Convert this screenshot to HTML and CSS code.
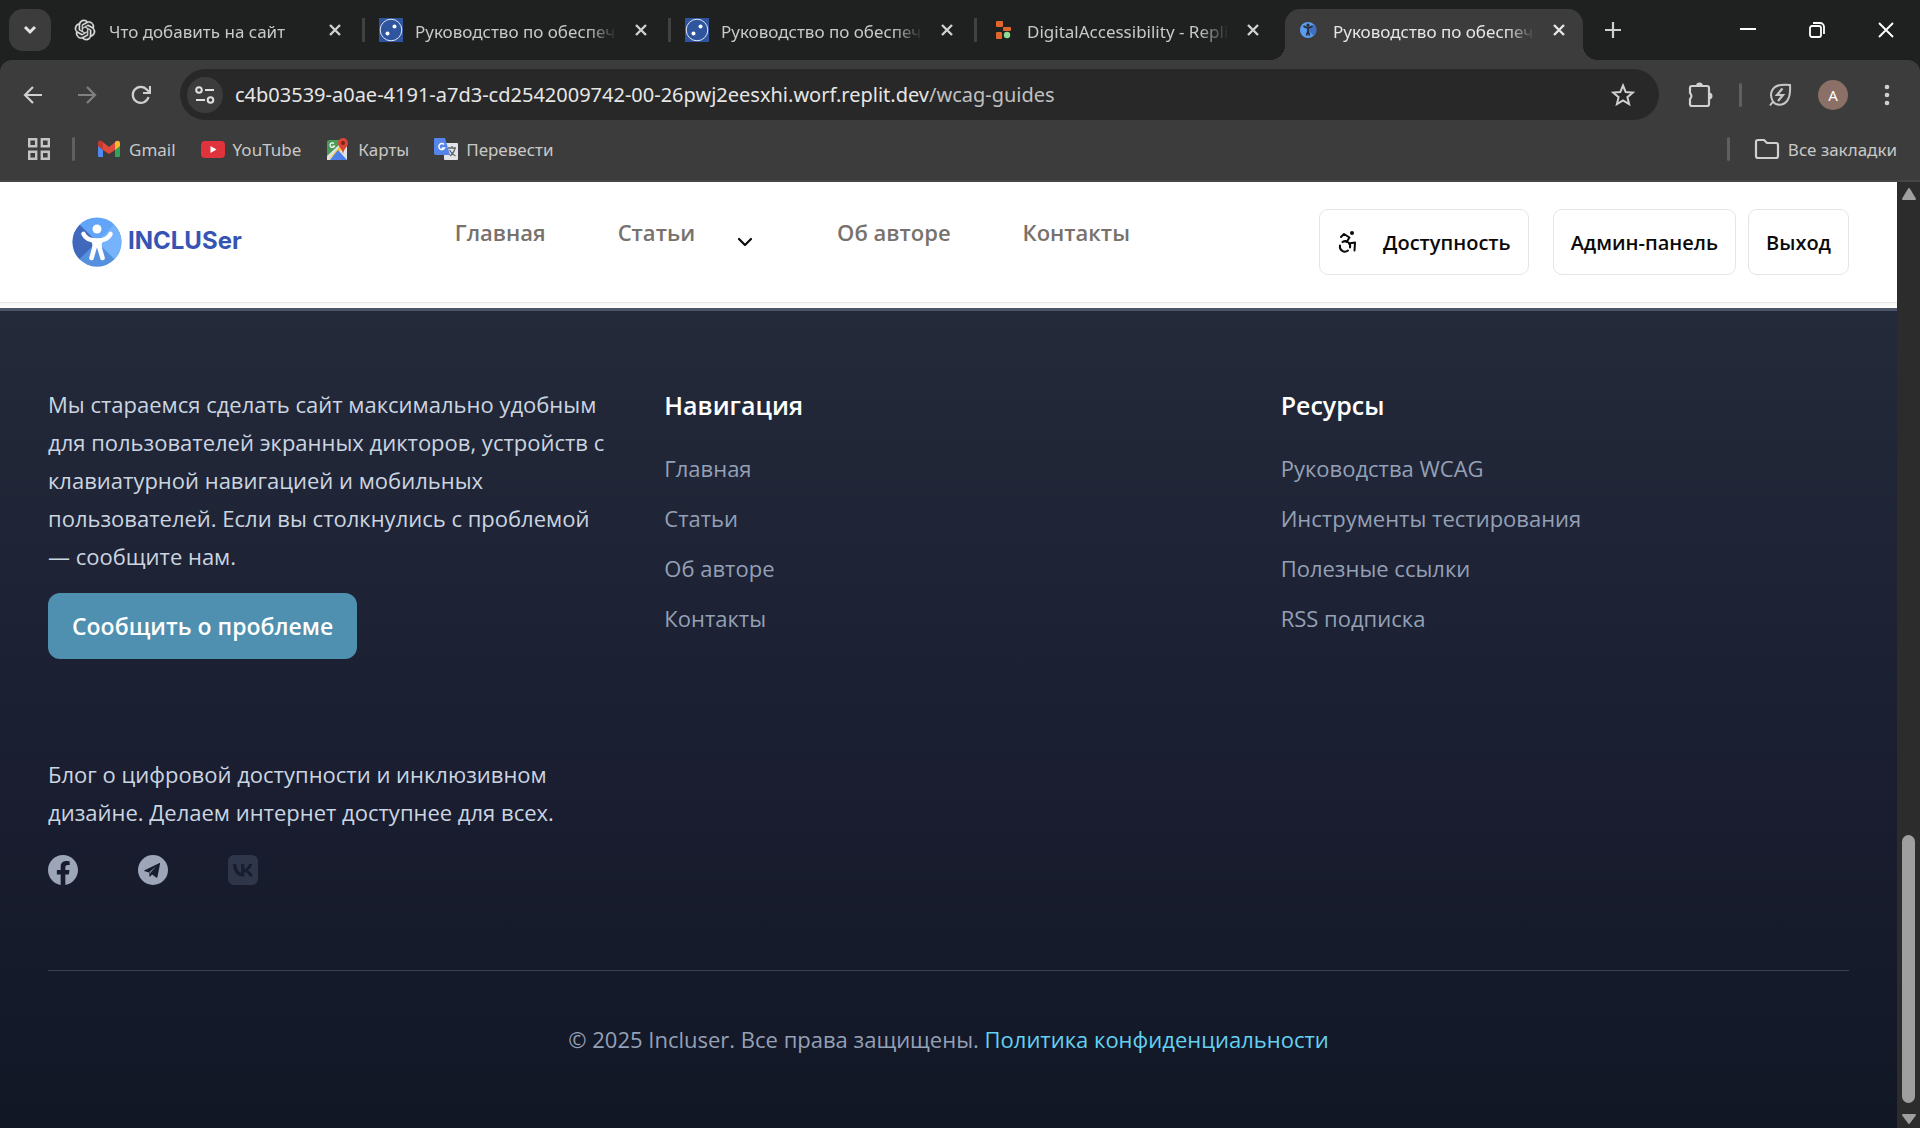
FILE: index.html
```html
<!DOCTYPE html>
<html lang="ru">
<head>
<meta charset="utf-8">
<meta name="viewport" content="width=device-width, initial-scale=1">
<title>Руководство по обеспечению доступности</title>
<link rel="stylesheet" href="styles.css">
</head>
<body>
<div class="browser">
  <div class="tabstrip">
    <button class="tab-search" aria-label="Поиск вкладок"><svg width="14" height="10" viewBox="0 0 14 10"><path d="M2 2l5 5 5-5" fill="none" stroke="#e3e3e3" stroke-width="3"/></svg></button>
    <div class="tabs">
      <div class="tab">
        <svg class="favicon" width="24" height="24" viewBox="-2 -2 28 28"><path fill="#dcdcdc" stroke="#dcdcdc" stroke-width=".4" d="M22.2819 9.8211a5.9847 5.9847 0 0 0-.5157-4.9108 6.0462 6.0462 0 0 0-6.5098-2.9A6.0651 6.0651 0 0 0 4.9807 4.1818a5.9847 5.9847 0 0 0-3.9977 2.9 6.0462 6.0462 0 0 0 .7427 7.0966 5.98 5.98 0 0 0 .511 4.9107 6.051 6.051 0 0 0 6.5146 2.9001A5.9847 5.9847 0 0 0 13.2599 24a6.0557 6.0557 0 0 0 5.7718-4.2058 5.9894 5.9894 0 0 0 3.9977-2.9001 6.0557 6.0557 0 0 0-.7475-7.0729zm-9.022 12.6081a4.4755 4.4755 0 0 1-2.8764-1.0408l.1419-.0804 4.7783-2.7582a.7948.7948 0 0 0 .3927-.6813v-6.7369l2.02 1.1686a.071.071 0 0 1 .038.052v5.5826a4.504 4.504 0 0 1-4.4945 4.4944zm-9.6607-4.1254a4.4708 4.4708 0 0 1-.5346-3.0137l.142.0852 4.783 2.7582a.7712.7712 0 0 0 .7806 0l5.8428-3.3685v2.3324a.0804.0804 0 0 1-.0332.0615L9.74 19.9502a4.4992 4.4992 0 0 1-6.1408-1.6464zM2.3408 7.8956a4.485 4.485 0 0 1 2.3655-1.9728V11.6a.7664.7664 0 0 0 .3879.6765l5.8144 3.3543-2.0201 1.1685a.0757.0757 0 0 1-.071 0l-4.8303-2.7865A4.504 4.504 0 0 1 2.3408 7.872zm16.5963 3.8558L13.1038 8.364 15.1192 7.2a.0757.0757 0 0 1 .071 0l4.8303 2.7913a4.4944 4.4944 0 0 1-.6765 8.1042v-5.6772a.79.79 0 0 0-.407-.667zm2.0107-3.0231l-.142-.0852-4.7735-2.7818a.7759.7759 0 0 0-.7854 0L9.409 9.2297V6.8974a.0662.0662 0 0 1 .0284-.0615l4.8303-2.7866a4.4992 4.4992 0 0 1 6.6802 4.66zM8.3065 12.863l-2.02-1.1638a.0804.0804 0 0 1-.038-.0567V6.0742a4.4992 4.4992 0 0 1 7.3757-3.4537l-.142.0805L8.704 5.459a.7948.7948 0 0 0-.3927.6813zm1.0976-2.3654l2.602-1.4998 2.6069 1.4998v2.9994l-2.5974 1.4997-2.6067-1.4997Z"/></svg>
        <span class="tab-title">Что добавить на сайт</span>
        <button class="tab-close" aria-label="Закрыть"><svg width="14" height="14" viewBox="0 0 14 14"><path d="M2 2l10 10M12 2L2 12" stroke="#d0d0d0" stroke-width="2.400"/></svg></button>
      </div>
      <div class="tab">
        <svg class="favicon" width="24" height="24" viewBox="0 0 24 24"><path fill="#2f559f" d="M0 0h24v24H0z"/><circle cx="12" cy="12" r="10.800" fill="none" stroke="#dde6f5" stroke-width="1"/><circle cx="15.500" cy="8.500" r="2" fill="#fff"/><circle cx="8.500" cy="15.500" r="2" fill="#fff"/></svg>
        <span class="tab-title">Руководство по обеспечению</span>
        <button class="tab-close" aria-label="Закрыть"><svg width="14" height="14" viewBox="0 0 14 14"><path d="M2 2l10 10M12 2L2 12" stroke="#d0d0d0" stroke-width="2.400"/></svg></button>
      </div>
      <div class="tab">
        <svg class="favicon" width="24" height="24" viewBox="0 0 24 24"><path fill="#2f559f" d="M0 0h24v24H0z"/><circle cx="12" cy="12" r="10.800" fill="none" stroke="#dde6f5" stroke-width="1"/><circle cx="15.500" cy="8.500" r="2" fill="#fff"/><circle cx="8.500" cy="15.500" r="2" fill="#fff"/></svg>
        <span class="tab-title">Руководство по обеспечению</span>
        <button class="tab-close" aria-label="Закрыть"><svg width="14" height="14" viewBox="0 0 14 14"><path d="M2 2l10 10M12 2L2 12" stroke="#d0d0d0" stroke-width="2.400"/></svg></button>
      </div>
      <div class="tab tab-last">
        <svg class="favicon" width="24" height="24" viewBox="0 0 24 24"><rect x="5" y="3" width="7" height="6" rx="1" fill="#e0662b"/><rect x="12" y="9" width="8" height="4" rx="1" fill="#e0662b"/><rect x="5" y="14" width="6" height="7" rx="1" fill="#e0662b"/><circle cx="16" cy="17" r="3.200" fill="#8fdc8f"/></svg>
        <span class="tab-title">DigitalAccessibility - Replit</span>
        <button class="tab-close" aria-label="Закрыть"><svg width="14" height="14" viewBox="0 0 14 14"><path d="M2 2l10 10M12 2L2 12" stroke="#d0d0d0" stroke-width="2.400"/></svg></button>
      </div>
      <div class="tab tab-active">
        <svg class="favicon" width="24" height="24" viewBox="0 0 24 24"><circle cx="11" cy="12" r="8" fill="#5a9cf0"/><path d="M11 12l6-6a8 8 0 0 1 0 12z" fill="#3f6fc0"/><path d="M6.500 8q4.500 3.500 9 0M11 10v4M9.500 17.500l1.500-4.500 1.500 4.500" fill="none" stroke="#2b3038" stroke-width="1.800"/><circle cx="11" cy="7.200" r="1.600" fill="#2b3038"/></svg>
        <span class="tab-title">Руководство по обеспечению</span>
        <button class="tab-close" aria-label="Закрыть"><svg width="14" height="14" viewBox="0 0 14 14"><path d="M2 2l10 10M12 2L2 12" stroke="#e6e6e6" stroke-width="2.400"/></svg></button>
      </div>
    </div>
    <button class="new-tab" aria-label="Новая вкладка"><svg width="16" height="16" viewBox="0 0 16 16"><path d="M8 0v16M0 8h16" stroke="#d0d0d0" stroke-width="2.200"/></svg></button>
    <div class="window-controls">
      <button aria-label="Свернуть"><svg width="16" height="16" viewBox="0 0 16 16"><path d="M0 7h16" stroke="#fff" stroke-width="2"/></svg></button>
      <button aria-label="Восстановить"><svg width="16" height="16" viewBox="0 0 16 16"><g fill="none" stroke="#fff" stroke-width="1.800"><rect x="1" y="4" width="11" height="11" rx="2"/><path d="M4 1h7a4 4 0 0 1 4 4v7"/></g></svg></button>
      <button aria-label="Закрыть окно"><svg width="16" height="16" viewBox="0 0 16 16"><path d="M1 1l14 14M15 1L1 15" stroke="#fff" stroke-width="1.900"/></svg></button>
    </div>
  </div>

  <div class="toolbar">
    <button class="tool" aria-label="Назад"><svg width="20" height="20" viewBox="0 0 20 20"><path d="M19 10H3M10 2l-8 8 8 8" fill="none" stroke="#d0d0d0" stroke-width="2.200"/></svg></button>
    <button class="tool" aria-label="Вперёд"><svg width="20" height="20" viewBox="0 0 20 20"><path d="M1 10h16M10 2l8 8-8 8" fill="none" stroke="#808080" stroke-width="2.200"/></svg></button>
    <button class="tool" aria-label="Обновить"><svg width="20" height="20" viewBox="0 0 20 20"><path d="M17.500 12A8 8 0 1 1 16 4.800l2 2" fill="none" stroke="#d0d0d0" stroke-width="2.200"/><path d="M12 8h7V1" fill="none" stroke="#d0d0d0" stroke-width="2.200"/></svg></button>
    <div class="omnibox">
      <button class="site-info" aria-label="Сведения о сайте"><svg width="20" height="20" viewBox="0 0 20 20"><g fill="none" stroke="#e0e0e0" stroke-width="2"><circle cx="4" cy="5" r="2.800"/><path d="M10 5h9"/><circle cx="15.500" cy="15" r="2.800"/><path d="M1 15h9"/></g></svg></button>
      <a class="url" href="#">c4b03539-a0ae-4191-a7d3-cd2542009742-00-26pwj2eesxhi.worf.replit.dev<span class="url-path">/wcag-guides</span></a>
      <button class="star" aria-label="Добавить в закладки"><svg width="24" height="24" viewBox="0 0 24 24"><path d="M12 2.500l2.700 6.600 7.100.5-5.400 4.600 1.700 6.900L12 17.400l-6.100 3.700 1.700-6.900-5.400-4.600 7.100-.5z" fill="none" stroke="#d0d0d0" stroke-width="2"/></svg></button>
    </div>
    <div class="tool-right">
      <button aria-label="Расширения"><svg width="26" height="26" viewBox="0 0 26 26"><path d="M3 6q0-2 2-2h15q2 0 2 2v16q0 2-2 2H5q-2 0-2-2v-5a4 4 0 0 0 0-6z" fill="none" stroke="#d0d0d0" stroke-width="2.200"/><path d="M9 4a3.500 3.500 0 0 1 7 0zM22 10.500a3.500 3.500 0 0 1 0 7z" fill="#d0d0d0"/></svg></button>
      <span class="divider"></span>
      <button aria-label="Экономия энергии"><svg width="24" height="24" viewBox="0 0 24 24"><g fill="none" stroke="#c8c8c8" stroke-width="2"><path d="M5 18.500C1 12 3 3 13 2q5-.5 9 0c.500 8-.500 13-3 16-4 5-11 5-14 .5zL2 22.500"/><path d="M14.500 5.500L9 12h6l-5 6" stroke-width="2.200"/></g></svg></button>
      <button class="avatar" aria-label="Профиль">A</button>
      <button class="menu" aria-label="Меню"><svg width="6" height="22" viewBox="0 0 6 22"><g fill="#d0d0d0"><circle cx="3" cy="3" r="2.300"/><circle cx="3" cy="11" r="2.300"/><circle cx="3" cy="19" r="2.300"/></g></svg></button>
    </div>
  </div>

  <div class="bookmarks">
    <button class="apps" aria-label="Приложения"><svg width="22" height="22" viewBox="0 0 22 22"><g fill="none" stroke="#c4c4c4" stroke-width="2.400"><path d="M1.200 1.200h7v7h-7zM13.800 1.200h7v7h-7zM1.200 13.800h7v7h-7zM13.800 13.800h7v7h-7z"/></g></svg></button>
    <span class="divider"></span>
    <nav class="bookmark-list">
      <a href="#"><svg width="24" height="24" viewBox="0 0 24 24"><path d="M1 6v13q0 1 1 1h4V9z" fill="#4e8af0"/><path d="M23 6v13q0 1-1 1h-4V9z" fill="#35a155"/><path d="M1 6q.5-3 3.500-2L12 10l7.500-6q3-1 3.500 2v3l-5 4-6 4-6-4-5-4z" fill="#e04a3c"/><path d="M18 5l1.500-1q3-1 3.500 2v3l-5 4z" fill="#f3bb2c"/><path d="M6 5L4.500 4Q1.500 3 1 6v3l5 4z" fill="#c13a30"/></svg>Gmail</a>
      <a href="#"><svg width="24" height="24" viewBox="0 0 24 24"><rect y="4" width="24" height="17" rx="4" fill="#e0333c"/><path d="M9.500 9l6 3.500-6 3.500z" fill="#fff"/></svg>YouTube</a>
      <a href="#"><svg width="24" height="24" viewBox="0 0 24 24"><rect x="1" y="3" width="20" height="20" rx="2" fill="#4b9a55"/><path d="M1 19L15 6h6v17H1z" fill="#dce4ea"/><path d="M2 23L15 8l5-3-3 7z" fill="#f5c83a"/><path d="M4 23l8-10 9 10z" fill="#4c80e8"/><path d="M17 1a5 5 0 0 1 5 5c0 4-4 5-5 11-1-6-5-7-5-11a5 5 0 0 1 5-5z" fill="#da4437"/><circle cx="17" cy="6" r="2" fill="#7b231c"/><path d="M8 6.500A2.300 2.300 0 1 0 8.500 9H6.500" fill="none" stroke="#fff" stroke-width="1.200"/></svg>Карты</a>
      <a href="#"><svg width="24" height="24" viewBox="0 0 24 24"><rect x="10" y="6" width="14" height="17" rx="1" fill="#e2e4e8"/><path d="M1 1h10l5 17H2q-2 0-2-2V2q0-1 1-1z" fill="#5585ea"/><path d="M10 7.500A3 3 0 1 0 10.500 11H7.800" fill="none" stroke="#fff" stroke-width="1.500"/><path d="M14 11h8M18 9v2M21 11q-1 5-5 8M15.500 13q2 4 6 6" fill="none" stroke="#5f6770" stroke-width="1.300"/></svg>Перевести</a>
    </nav>
    <span class="divider divider-right"></span>
    <a class="all-bookmarks" href="#"><svg width="26" height="22" viewBox="0 0 26 22"><path d="M2 4q0-2 2-2h6l3 3h9q2 0 2 2v11q0 2-2 2H4q-2 0-2-2z" fill="none" stroke="#d0d0d0" stroke-width="2.200"/></svg>Все закладки</a>
  </div>

  <div class="viewport">
    <div class="page">
      <header class="header">
        <a class="logo" href="#">
          <svg width="50" height="50" viewBox="0 0 50 50"><defs><clipPath id="disc"><circle cx="25" cy="25" r="24.500"/></clipPath></defs><g clip-path="url(#disc)"><path fill="#62a4f8" d="M0 0h50v50H0z"/><path fill="#75b3fa" d="M25 25L50 0v50z"/><path fill="#4069bb" d="M25 25L0 0v50z"/><path fill="#5590de" d="M25 25l25 25H0z"/></g><g fill="none" stroke="#fff" stroke-linecap="round"><path d="M11.500 17c2 5 7 6.500 13.500 6.500S36.500 22 38.500 17" stroke-width="4.600"/><path d="M23 29L19.500 41M27 29L30.500 41" stroke-width="4.600"/></g><path d="M18.500 22h13L29.500 28l.5 3-3 1-2-2-2 2-3-1 .5-3z" fill="#fff"/><circle cx="25" cy="12" r="4.500" fill="#fff"/></svg>
          <span>INCLUSer</span>
        </a>
        <nav class="nav">
          <a href="#">Главная</a>
          <div class="nav-group">
            <a href="#">Статьи</a>
            <button class="nav-toggle" aria-label="Открыть меню"><svg width="16" height="10" viewBox="0 0 16 10"><path d="M2 2l6 6 6-6" fill="none" stroke="#0c0a09" stroke-width="2.200" stroke-linecap="round" stroke-linejoin="round"/></svg></button>
          </div>
          <a href="#">Об авторе</a>
          <a href="#">Контакты</a>
        </nav>
        <div class="actions">
          <button class="btn btn-access"><svg width="20" height="24" viewBox="0 0 20 24"><g fill="none" stroke="#0c0a09" stroke-width="2" stroke-linecap="round" stroke-linejoin="round"><path d="M17.500 20.500l.5-8-6 1"/><path d="M4 7l3-3 5.500 3.500-3 4.500"/><path d="M3 15.500a5 5 0 0 0 8 5M13 17.500a5 5 0 0 0-7.500-5.500"/></g><circle cx="15" cy="3" r="2" fill="#0c0a09"/></svg>Доступность</button>
          <div class="account">
            <button class="btn">Админ-панель</button>
            <button class="btn">Выход</button>
          </div>
        </div>
      </header>

      <footer class="footer">
        <div class="columns">
          <section class="col">
            <p>Мы стараемся сделать сайт максимально удобным для пользователей экранных дикторов, устройств с клавиатурной навигацией и мобильных пользователей. Если вы столкнулись с проблемой — сообщите нам.</p>
            <button class="report">Сообщить о проблеме</button>
          </section>
          <section class="col">
            <h2>Навигация</h2>
            <ul>
              <li><a href="#">Главная</a></li>
              <li><a href="#">Статьи</a></li>
              <li><a href="#">Об авторе</a></li>
              <li><a href="#">Контакты</a></li>
            </ul>
          </section>
          <section class="col">
            <h2>Ресурсы</h2>
            <ul>
              <li><a href="#">Руководства WCAG</a></li>
              <li><a href="#">Инструменты тестирования</a></li>
              <li><a href="#">Полезные ссылки</a></li>
              <li><a href="#">RSS подписка</a></li>
            </ul>
          </section>
          <section class="col">
            <p>Блог о цифровой доступности и инклюзивном дизайне. Делаем интернет доступнее для всех.</p>
            <div class="social">
              <a href="#" aria-label="Facebook"><svg width="30" height="30" viewBox="0 0 24 24"><path fill="#9ca6b8" d="M24 12.070C24 5.400 18.630 0 12 0S0 5.400 0 12.070C0 18.100 4.390 23.100 10.130 24v-8.440H7.080v-3.490h3.050V9.410c0-3.020 1.790-4.690 4.530-4.690 1.310 0 2.680.24 2.680.24v2.970h-1.510c-1.490 0-1.960.93-1.960 1.890v2.250h3.330l-.53 3.490h-2.800V24C19.610 23.100 24 18.100 24 12.070z"/></svg></a>
              <a href="#" aria-label="Telegram"><svg width="30" height="30" viewBox="0 0 24 24"><circle cx="12" cy="12" r="12" fill="#9ca6b8"/><path fill="#181d2e" d="M17.600 7.200l-2 10.200c-.1.700-.6.900-1.100.6l-3.200-2.400-1.500 1.500c-.3.300-.6.300-.6-.1l-.4-3-3.300-1.100c-.7-.2-.7-.7.200-1L16.800 6.500c.6-.2 1 .1.800.700zM14.800 9l-5.600 4.600.3 2 .5-1.700z"/></svg></a>
              <a href="#" aria-label="ВКонтакте"><svg width="30" height="30" viewBox="0 0 30 30"><rect width="30" height="30" rx="6" fill="#30364a"/><path fill="#181d2f" d="M15.900 21.600C9.100 21.600 5.200 17 5 9h3.400c.1 5.800 2.700 8.300 4.700 8.800V9h3.200v5c2-.2 4-2.500 4.700-5h3.200c-.5 3-2.700 5.300-4.300 6.200 1.600.8 4.100 2.700 5.100 6.400h-3.500c-.8-2.400-2.600-4.200-5.200-4.500v4.500z"/></svg></a>
            </div>
          </section>
        </div>
        <div class="copyright">© 2025 Incluser. Все права защищены. <a href="#">Политика конфиденциальности</a></div>
      </footer>
    </div>
    <div class="scrollbar">
      <svg width="16" height="14" viewBox="0 0 16 14"><path d="M8 2l6 10H2z" fill="#9f9f9f" stroke="#9f9f9f" stroke-width="2" stroke-linejoin="round"/></svg>
      <div class="thumb"></div>
      <svg width="16" height="12" viewBox="0 0 16 12"><path d="M8 10L2 2h12z" fill="#9f9f9f" stroke="#9f9f9f" stroke-width="2" stroke-linejoin="round"/></svg>
    </div>
  </div>
</div>
</body>
</html>
```
FILE: styles.css
```css
* { box-sizing: border-box; }

body {
  margin: 0;
  font-family: "Noto Sans", "Open Sans", sans-serif;
  font-size: 22px;
  color: #0c0a09;
}

button {
  font: inherit;
  color: inherit;
  background: none;
  border: 0;
  padding: 0;
  display: flex;
  align-items: center;
  justify-content: center;
  flex-shrink: 0;
}

a { color: inherit; text-decoration: none; }
svg { display: block; flex-shrink: 0; }

.browser {
  min-height: 100vh;
  display: flex;
  flex-direction: column;
  background: #1f2121;
}

/* Tab strip */
.tabstrip {
  height: 60px;
  display: flex;
  align-items: center;
  padding-left: 9px;
}

.tab-search {
  width: 42px;
  height: 42px;
  border-radius: 14px;
  background: #3c3c3c;
}

.tabs {
  display: flex;
  align-self: stretch;
  padding: 9px 0 0 10px;
}

.tab {
  width: 306px;
  display: flex;
  align-items: center;
  padding: 0 20px 9px 12px;
  color: #c8c8c8;
  background: linear-gradient(#404141, #404141) right 2px top 9px / 3px 24px no-repeat;
}

.tab-last { background: none; }

.tab-active {
  width: 298px;
  position: relative;
  color: #e6e6e6;
  background: #3c3c3c;
  border-radius: 15px 15px 0 0;
  padding-right: 12px;
}

.tab-active::before,
.tab-active::after {
  content: "";
  position: absolute;
  bottom: 0;
  width: 15px;
  height: 15px;
}

.tab-active::before {
  right: 100%;
  background: radial-gradient(circle at 0 0, transparent 15px, #3c3c3c 15px);
}

.tab-active::after {
  left: 100%;
  background: radial-gradient(circle at 100% 0, transparent 15px, #3c3c3c 15px);
}

.tab-title {
  flex: 1;
  margin: 0 12px;
  padding-top: 3px;
  font-size: 17px;
  line-height: 24px;
  white-space: nowrap;
  overflow: hidden;
  -webkit-mask-image: linear-gradient(to left, transparent, #000 30px);
  mask-image: linear-gradient(to left, transparent, #000 30px);
}

.tab-close { width: 24px; height: 24px; }
.new-tab { width: 42px; height: 42px; margin-left: 9px; }

.window-controls { display: flex; margin-left: auto; }
.window-controls button { width: 69px; height: 60px; }

/* Toolbar */
.toolbar {
  display: flex;
  align-items: center;
  padding: 9px 18px 9px 6px;
  background: #3c3c3c;
  border-radius: 12px 12px 0 0;
}

.tool { width: 54px; height: 42px; }

.omnibox {
  flex: 1;
  height: 51px;
  margin-left: 12px;
  padding: 0 24px 0 7px;
  display: flex;
  align-items: center;
  border-radius: 26px;
  background: #282828;
}

.site-info {
  width: 36px;
  height: 36px;
  border-radius: 50%;
  background: #3c3c3c;
}

.url {
  flex: 1;
  margin-left: 12px;
  font-size: 20px;
  color: #e6e6e6;
  white-space: nowrap;
}

.url-path { color: #c0c0c0; }

.tool-right {
  width: 243px;
  padding: 0 12px 0 28px;
  display: flex;
  align-items: center;
  gap: 26px;
}

.menu { margin-left: auto; }

.divider {
  width: 3px;
  height: 24px;
  border-radius: 2px;
  background: #606060;
}

.avatar {
  width: 30px;
  height: 30px;
  border-radius: 50%;
  background: #8a7066;
  color: #fff;
  font-size: 15px;
}

.bookmarks {
  display: flex;
  align-items: center;
  height: 53px;
  padding: 0 23px 11px 28px;
  background: #3c3c3c;
  border-bottom: 2px solid #474747;
  color: #c8c8c8;
  font-size: 17px;
}

.bookmarks > .divider { margin: 0 22px; }
.bookmarks > .divider-right { margin: 0 24px 0 auto; }
.bookmark-list { display: flex; gap: 25px; }
.bookmarks a { display: flex; align-items: center; gap: 8px; }

/* Web page area */
.viewport {
  flex: 1;
  display: flex;
}

.page {
  flex: 1;
  display: flex;
  flex-direction: column;
  background: #fff;
  font-family: "Open Sans", "Noto Sans", sans-serif;
}

.header {
  display: flex;
  align-items: center;
  justify-content: space-between;
  padding: 27px 48px;
  border-bottom: 1px solid #e5e5e5;
  box-shadow: 0 2px 4px #0000000d;
  margin-bottom: 5px;
}

.logo {
  display: flex;
  align-items: center;
  gap: 6px;
  padding: 0 24px;
  font-family: Inter, sans-serif;
  font-weight: 700;
  font-size: 24px;
  color: #3654b4;
}

.logo span { padding-bottom: 4px; }

.nav {
  display: flex;
  align-items: flex-start;
  gap: 72px;
  height: 66px;
  color: #78716c;
  font-weight: 600;
}

.nav a { line-height: 46px; }
.nav-group { display: flex; gap: 30px; }
.nav-toggle { width: 40px; height: 66px; }

.actions { display: flex; gap: 24px; }
.account { display: flex; gap: 12px; }

.btn {
  height: 66px;
  padding: 0 17px;
  border: 1px solid #e5e5e5;
  border-radius: 9px;
  font-size: 20px;
  font-weight: 600;
}

.btn-access { gap: 26px; }

.footer {
  flex: 1;
  padding: 74px 48px 48px;
  border-top: 3px solid #4a5568;
  background: linear-gradient(#242a3a, #1c2033 45%, #121726);
}

.columns {
  display: grid;
  grid-template-columns: repeat(3, minmax(0, 1fr));
  gap: 96px 48px;
}

.col p {
  margin: 0 0 18px;
  line-height: 38px;
  color: #cbd5e0;
}

.report {
  height: 66px;
  padding: 0 24px;
  border-radius: 12px;
  background: #4f8fb0;
  color: #fff;
  font-size: 23px;
  font-weight: 600;
}

.col h2 {
  margin: 0 0 24px;
  font-size: 25px;
  font-weight: 600;
  line-height: 40px;
  color: #fff;
}

.col ul {
  margin: 0;
  padding: 0;
  list-style: none;
  display: grid;
  gap: 12px;
  color: #94a0b6;
}

.col li { line-height: 38px; }

.social { display: flex; gap: 60px; padding-top: 6px; }

.copyright {
  margin-top: 85px;
  padding-top: 49px;
  border-top: 1px solid #3a4055;
  line-height: 38px;
  text-align: center;
  color: #94a0b6;
}

.copyright a { color: #63d2f0; }

.scrollbar {
  width: 23px;
  display: flex;
  flex-direction: column;
  align-items: center;
  padding: 5px 0 3px;
  background: #2c2c2c;
}

.thumb {
  width: 13px;
  height: 268px;
  margin: auto 0 10px;
  border-radius: 7px;
  background: #9f9f9f;
}
```
